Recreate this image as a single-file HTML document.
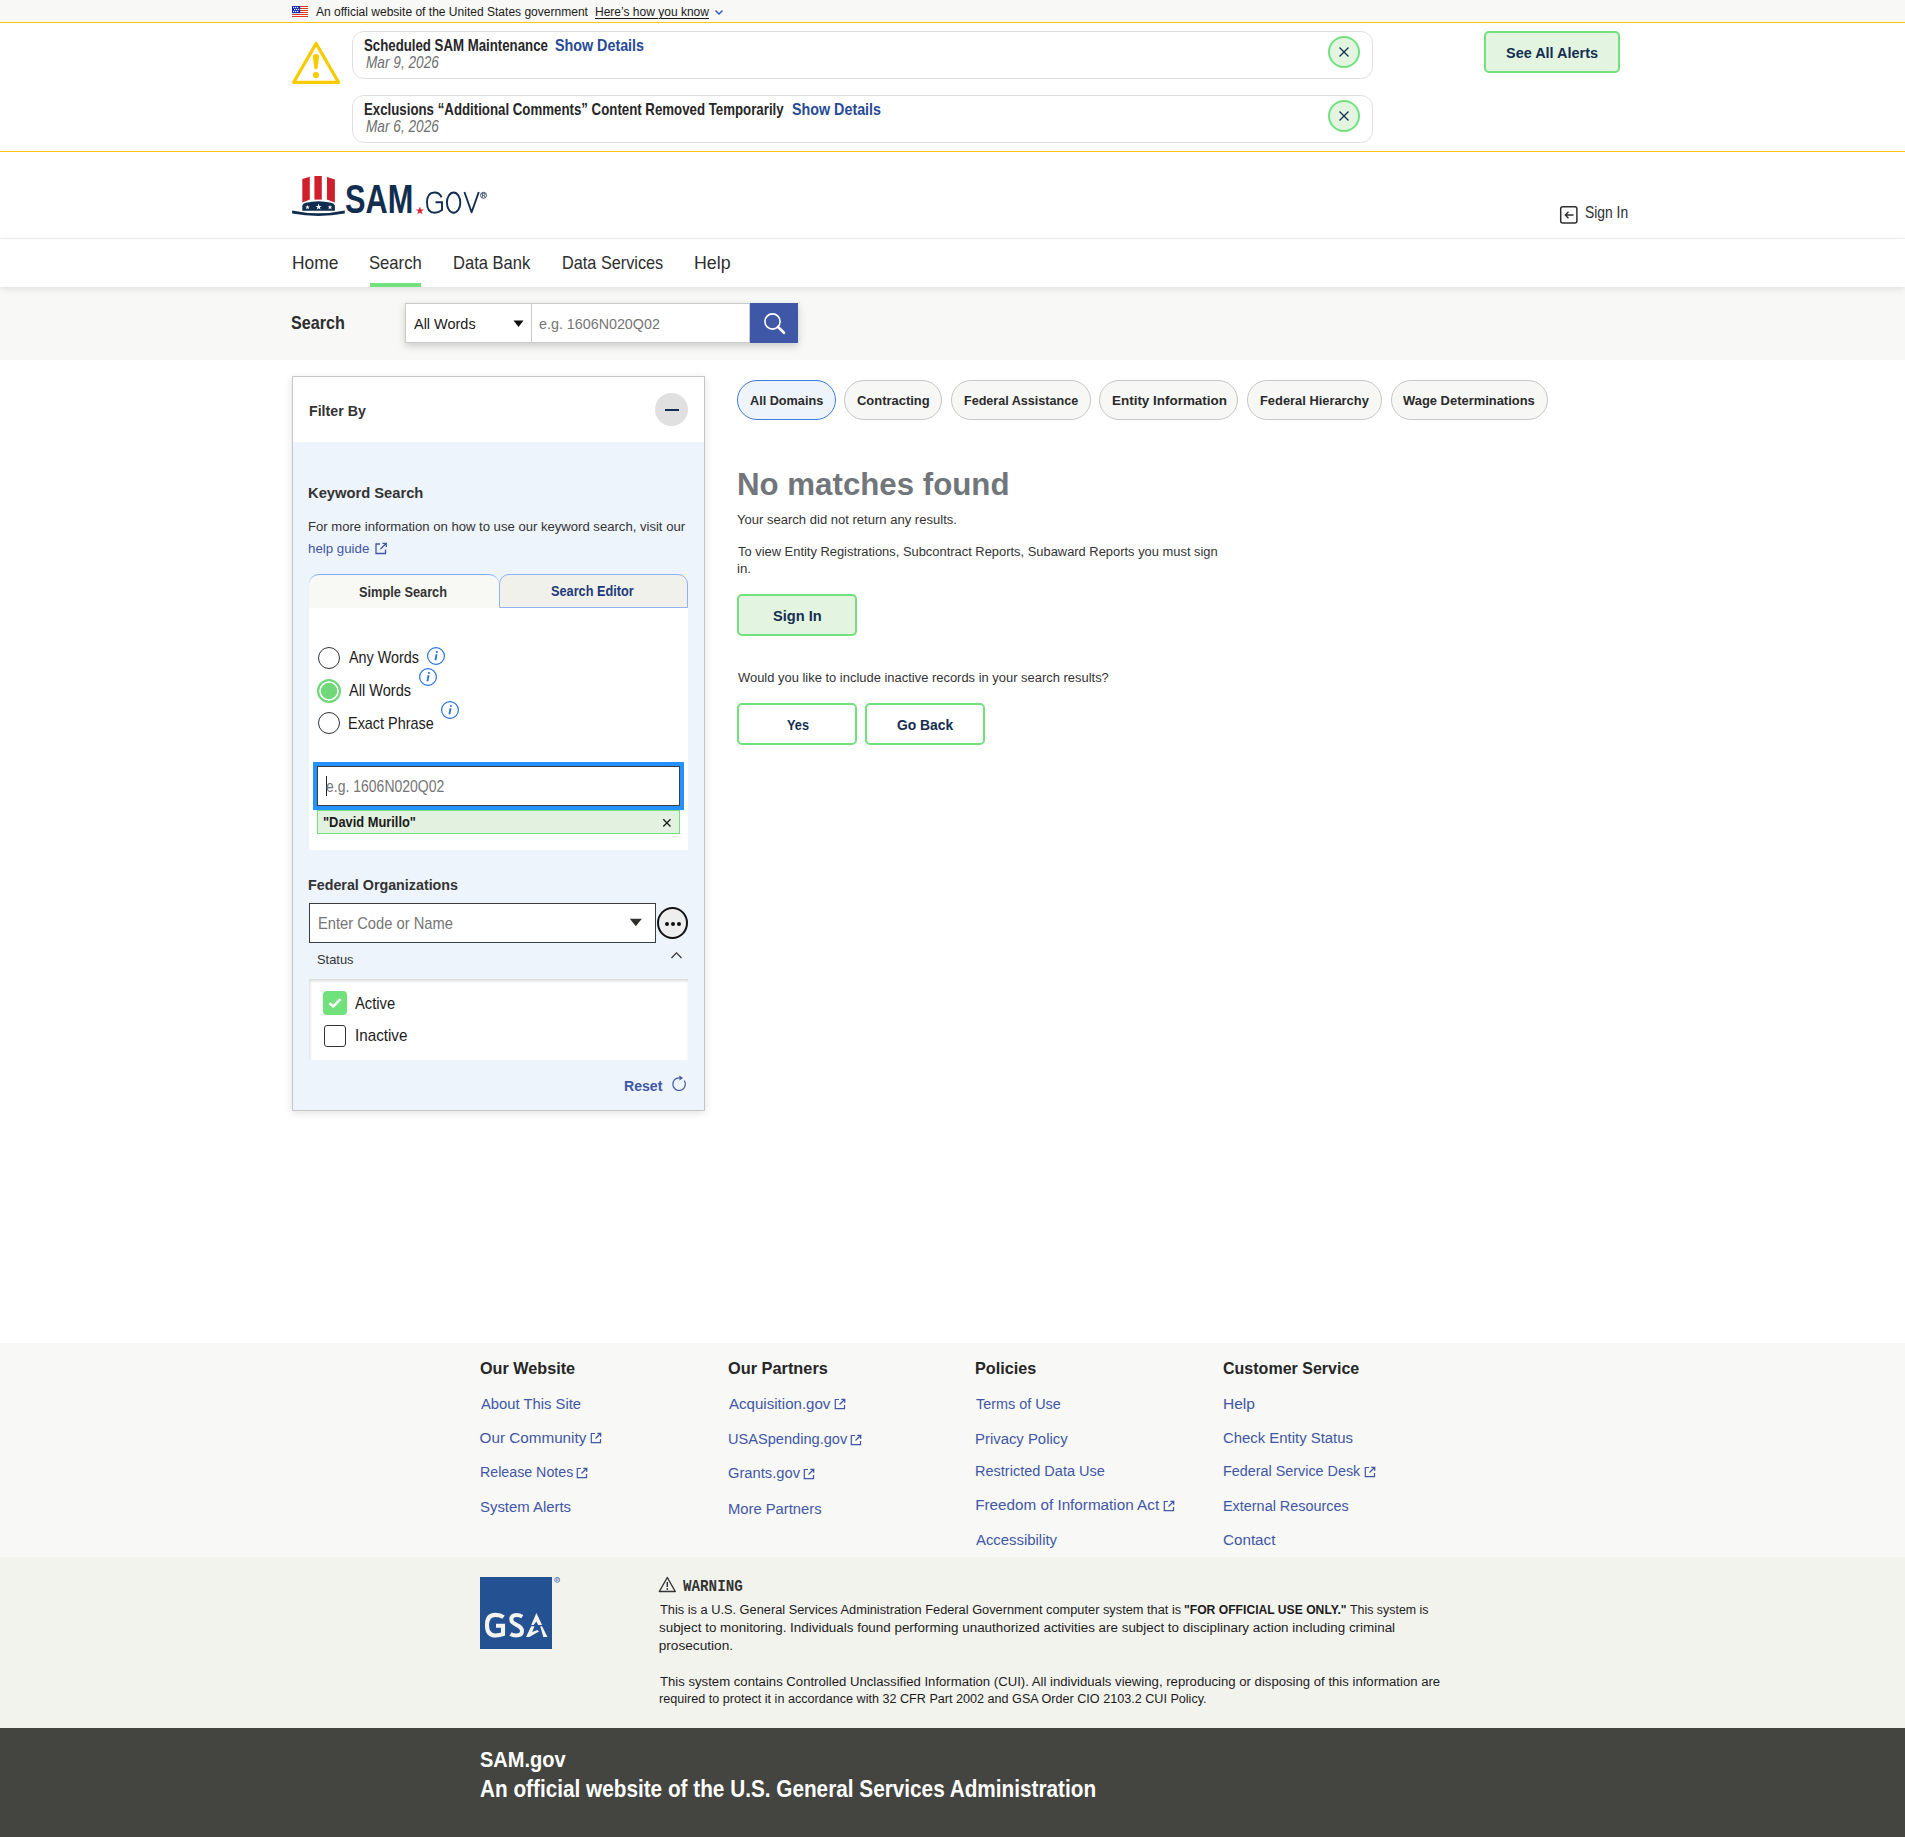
<!DOCTYPE html>
<html><head><meta charset="utf-8"><title>SAM.gov Search</title>
<style>
html,body{margin:0;padding:0;}
body{width:1905px;height:1837px;position:relative;overflow:hidden;background:#fff;font-family:"Liberation Sans",sans-serif;}
.t{position:absolute;white-space:nowrap;line-height:1;transform-origin:0 0;}
.b{position:absolute;}
svg.b{overflow:visible}
</style></head><body>
<div class="b" style="left:0px;top:0px;width:1905px;height:22px;background:#f8f8f6"></div>
<div class="b" style="left:0px;top:22px;width:1905px;height:1px;background:#fcc60e"></div>
<div class="b" style="left:0px;top:151px;width:1905px;height:1px;background:#fcc60e"></div>
<div class="b" style="left:0px;top:238px;width:1905px;height:1px;background:#f0f0ec"></div>
<div class="b" style="left:0px;top:287px;width:1905px;height:73px;background:#f8f8f6"></div>
<div class="b" style="left:0px;top:239px;width:1905px;height:48px;background:#fff;box-shadow:0 2px 7px rgba(0,0,0,.10);z-index:2"></div>
<div class="b" style="left:0px;top:1343px;width:1905px;height:214px;background:#f8f8f6"></div>
<div class="b" style="left:0px;top:1557px;width:1905px;height:171px;background:#f3f3ee"></div>
<div class="b" style="left:0px;top:1728px;width:1905px;height:109px;background:#444540"></div>
<svg class="b" style="left:292px;top:5px" width="16" height="13" viewBox="0 0 16 13"><rect width="16" height="13" fill="#fff"/><rect y="1" width="16" height="1" fill="#dc3a1a"/><rect y="3" width="16" height="1" fill="#dc3a1a"/><rect y="5" width="16" height="1" fill="#dc3a1a"/><rect y="7" width="16" height="1" fill="#dc3a1a"/><rect y="9" width="16" height="1" fill="#dc3a1a"/><rect y="11" width="16" height="1" fill="#dc3a1a"/><rect y="1" width="8.2" height="7.2" fill="#0a24b8"/><circle cx="1.7" cy="2.5" r="0.65" fill="#fff"/><circle cx="3.7" cy="2.5" r="0.65" fill="#fff"/><circle cx="5.7" cy="2.5" r="0.65" fill="#fff"/><circle cx="2.7" cy="4.5" r="0.65" fill="#fff"/><circle cx="4.7" cy="4.5" r="0.65" fill="#fff"/><circle cx="6.7" cy="4.5" r="0.65" fill="#fff"/><circle cx="1.7" cy="6.5" r="0.65" fill="#fff"/><circle cx="3.7" cy="6.5" r="0.65" fill="#fff"/><circle cx="5.7" cy="6.5" r="0.65" fill="#fff"/></svg>
<div class="t" style="left:316.00px;top:4.93px;font-size:13.08px;color:#1b1b1b;transform:scaleX(0.9199);">An official website of the United States government</div>
<div class="t" style="left:594.99px;top:4.93px;font-size:13.08px;color:#1b1b1b;transform:scaleX(0.9187);text-decoration:underline;text-decoration-thickness:1px;text-underline-offset:2px;">Here’s how you know</div>
<svg class="b" style="left:714px;top:8px" width="10" height="8" viewBox="0 0 10 8"><path d="M1.5 2.5 L5 6 L8.5 2.5" fill="none" stroke="#2d56b3" stroke-width="1.4"/></svg>
<svg class="b" style="left:290px;top:39px" width="52" height="47" viewBox="0 0 52 47"><path d="M26.1 4.5 L48.5 43.3 L3.7 43.3 Z" fill="none" stroke="#f7cb00" stroke-width="3.3" stroke-linejoin="round"/><path d="M22.8 17.6 Q22.8 15 25.95 15 Q29.1 15 29.1 17.6 L27.6 29 Q27.5 30.2 25.95 30.2 Q24.4 30.2 24.3 29 Z" fill="#f7cb00"/><circle cx="25.95" cy="36" r="3.1" fill="#f7cb00"/></svg>
<div class="b" style="left:352px;top:31px;width:1021px;height:48px;border:1px solid #dfdfdf;border-radius:12px;box-sizing:border-box;background:#fff"></div>
<div class="t" style="left:363.99px;top:37.71px;font-size:15.7px;color:#262626;font-weight:700;transform:scaleX(0.8437);">Scheduled SAM Maintenance</div>
<div class="t" style="left:554.99px;top:37.71px;font-size:15.7px;color:#274b98;font-weight:700;transform:scaleX(0.9117);">Show Details</div>
<div class="t" style="left:365.50px;top:55.11px;font-size:15.7px;color:#6f6f6f;font-style:italic;transform:scaleX(0.8701);">Mar 9, 2026</div>
<div class="b" style="left:1328px;top:36px;width:32px;height:32px;border:2px solid #70e17b;border-radius:50%;box-sizing:border-box;background:#e3f5e1"></div>
<svg class="b" style="left:1338px;top:46px" width="12" height="12" viewBox="0 0 12 12"><path d="M1.5 1.5 L10.5 10.5 M10.5 1.5 L1.5 10.5" stroke="#162e51" stroke-width="1.3"/></svg>
<div class="b" style="left:352px;top:95px;width:1021px;height:48px;border:1px solid #dfdfdf;border-radius:12px;box-sizing:border-box;background:#fff"></div>
<div class="t" style="left:364.00px;top:101.71px;font-size:15.7px;color:#262626;font-weight:700;transform:scaleX(0.8451);">Exclusions “Additional Comments” Content Removed Temporarily</div>
<div class="t" style="left:791.99px;top:101.71px;font-size:15.7px;color:#274b98;font-weight:700;transform:scaleX(0.9117);">Show Details</div>
<div class="t" style="left:365.50px;top:119.11px;font-size:15.7px;color:#6f6f6f;font-style:italic;transform:scaleX(0.8701);">Mar 6, 2026</div>
<div class="b" style="left:1328px;top:100px;width:32px;height:32px;border:2px solid #70e17b;border-radius:50%;box-sizing:border-box;background:#e3f5e1"></div>
<svg class="b" style="left:1338px;top:110px" width="12" height="12" viewBox="0 0 12 12"><path d="M1.5 1.5 L10.5 10.5 M10.5 1.5 L1.5 10.5" stroke="#162e51" stroke-width="1.3"/></svg>
<div class="b" style="left:1484px;top:31px;width:136px;height:42px;border:2px solid #70e17b;border-radius:5px;box-sizing:border-box;background:#e3f5e1"></div>
<div class="t" style="left:1505.99px;top:45.95px;font-size:14.24px;color:#162e51;font-weight:700;transform:scaleX(1.0147);">See All Alerts</div>
<svg class="b" style="left:290px;top:172px" width="200" height="48" viewBox="290 172 200 48">
<path d="M302.3 179.1 L309.8 176.8 L309.8 199.6 L302.3 202.5 Z" fill="#cf1f2c"/>
<path d="M314.4 176 L321.8 176 L321.8 199.6 L314.4 199.6 Z" fill="#cf1f2c"/>
<path d="M327 177 L334.9 179.4 L334.9 202.5 L327 199.6 Z" fill="#cf1f2c"/>
<path d="M302.3 210.7 L302.3 205.5 Q303 203.5 306 202.8 Q318.6 199.6 331 202.8 Q334.2 203.5 334.9 205.5 L334.9 210.7 Z" fill="#112e51"/>
<path d="M292.1 210.4 Q318.6 216 344.8 210.4 L344.8 213.6 Q318.6 218.3 292.1 213.6 Z" fill="#112e51"/>
<path d="M318.6 203.6 L319.4 205.9 L321.7 205.9 L319.8 207.3 L320.5 209.6 L318.6 208.2 L316.7 209.6 L317.4 207.3 L315.5 205.9 L317.8 205.9 Z" fill="#fff"/>
<path d="M307.5 204.9 L308.1 206.5 L309.8 206.5 L308.5 207.5 L309 209.2 L307.5 208.2 L306 209.2 L306.5 207.5 L305.2 206.5 L306.9 206.5 Z" fill="#fff"/>
<path d="M330 204.9 L330.6 206.5 L332.3 206.5 L331 207.5 L331.5 209.2 L330 208.2 L328.5 209.2 L329 207.5 L327.7 206.5 L329.4 206.5 Z" fill="#fff"/>
<text x="345" y="213" font-size="40" font-weight="700" fill="#112e51" font-family="Liberation Sans" textLength="68.2" lengthAdjust="spacingAndGlyphs">SAM</text>
<path d="M419.9 206.5 L421 209.4 L424.1 209.4 L421.6 211.3 L422.5 214.3 L419.9 212.5 L417.3 214.3 L418.2 211.3 L415.7 209.4 L418.8 209.4 Z" fill="#d52b3a"/>
<path d="M441.6 197.3 Q439.5 192.5 434.5 192.5 Q427 192.5 427 202.6 Q427 212.8 434.5 212.8 Q438.5 212.8 442 210 L442 202.3 L435.5 202.3" fill="none" stroke="#112e51" stroke-width="1.9"/>
<ellipse cx="453.6" cy="202.6" rx="6.7" ry="10.1" fill="none" stroke="#112e51" stroke-width="1.9"/>
<path d="M464.4 192 L471.6 212.3 L478.8 192" fill="none" stroke="#112e51" stroke-width="1.9" stroke-linejoin="round"/>
<circle cx="483.5" cy="195.3" r="3" fill="none" stroke="#112e51" stroke-width="0.8"/>
<path d="M482.4 197.4 L482.4 193.3 L484 193.3 Q485 193.3 485 194.3 Q485 195.3 484 195.3 L482.4 195.3 M483.8 195.3 L485 197.4" fill="none" stroke="#112e51" stroke-width="0.7"/>
</svg>
<svg class="b" style="left:1559px;top:205px" width="20" height="20" viewBox="0 0 20 20"><rect x="1.7" y="1.7" width="16.2" height="16.2" rx="2" fill="none" stroke="#2e2e2e" stroke-width="1.5"/><path d="M14.5 10 L6.5 10 M9.5 6.8 L6.3 10 L9.5 13.2" fill="none" stroke="#2e2e2e" stroke-width="1.4"/></svg>
<div class="t" style="left:1584.95px;top:205.46px;font-size:15.99px;color:#2e2e2e;transform:scaleX(0.8655);">Sign In</div>
<div class="t" style="left:291.64px;top:253.62px;font-size:18.17px;color:#2e2e2e;transform:scaleX(0.9564);z-index:3;">Home</div>
<div class="t" style="left:368.96px;top:253.62px;font-size:18.17px;color:#2e2e2e;transform:scaleX(0.9165);z-index:3;">Search</div>
<div class="t" style="left:452.59px;top:253.62px;font-size:18.17px;color:#2e2e2e;transform:scaleX(0.9110);z-index:3;">Data Bank</div>
<div class="t" style="left:561.69px;top:253.62px;font-size:18.17px;color:#2e2e2e;transform:scaleX(0.8959);z-index:3;">Data Services</div>
<div class="t" style="left:694.39px;top:253.62px;font-size:18.17px;color:#2e2e2e;transform:scaleX(0.9794);z-index:3;">Help</div>
<div class="b" style="left:370px;top:283px;width:51px;height:4px;background:#70e17b;z-index:3"></div>
<div class="t" style="left:291.44px;top:313.62px;font-size:18.17px;color:#2e2e2e;font-weight:700;transform:scaleX(0.8892);">Search</div>
<div class="b" style="left:405px;top:303px;width:393px;height:40px;box-shadow:0 3px 8px rgba(0,0,0,.18);background:#fff"></div>
<div class="b" style="left:405px;top:303px;width:127px;height:40px;border:1px solid #c9c9c9;box-sizing:border-box;background:#fff"></div>
<div class="b" style="left:532px;top:303px;width:218px;height:40px;border:1px solid #c9c9c9;border-left:none;box-sizing:border-box;background:#fff"></div>
<div class="t" style="left:414.42px;top:315.96px;font-size:15.41px;color:#1b1b1b;transform:scaleX(0.9393);">All Words</div>
<svg class="b" style="left:513px;top:320px" width="11" height="8" viewBox="0 0 11 8"><path d="M0.5 0.5 L10.5 0.5 L5.5 7 Z" fill="#111"/></svg>
<div class="t" style="left:539.39px;top:315.96px;font-size:15.41px;color:#757575;transform:scaleX(0.9281);">e.g. 1606N020Q02</div>
<div class="b" style="left:750px;top:303px;width:48px;height:40px;background:#3f57a7"></div>
<svg class="b" style="left:750px;top:303px" width="48" height="40" viewBox="0 0 48 40"><circle cx="22.5" cy="18.5" r="7.6" fill="none" stroke="#fff" stroke-width="1.6"/><path d="M28 24 L34 29.8" stroke="#fff" stroke-width="2.6" stroke-linecap="round"/></svg>
<div class="b" style="left:292px;top:376px;width:413px;height:735px;border:1px solid #c6c6c6;box-sizing:border-box;background:#edf4fb;box-shadow:0 2px 8px rgba(0,0,0,.12)"></div>
<div class="b" style="left:293px;top:377px;width:411px;height:65px;background:#fff"></div>
<div class="t" style="left:308.67px;top:403.70px;font-size:14.53px;color:#333;font-weight:700;transform:scaleX(0.9781);">Filter By</div>
<div class="b" style="left:655px;top:393px;width:33px;height:33px;background:#e0e0e0;border-radius:50%"></div>
<div class="b" style="left:665px;top:409px;width:14px;height:1.6px;background:#162e51"></div>
<div class="t" style="left:308.39px;top:485.08px;font-size:15.26px;color:#333;font-weight:700;transform:scaleX(0.9652);">Keyword Search</div>
<div class="t" style="left:308.40px;top:519.80px;font-size:13.23px;color:#333;transform:scaleX(0.9908);">For more information on how to use our keyword search, visit our</div>
<div class="t" style="left:308.39px;top:541.50px;font-size:13.23px;color:#4155a8;transform:scaleX(1.0055);">help guide</div>
<svg class="b" style="left:374px;top:542px" width="14" height="13" viewBox="0 0 14 13"><path d="M6 2 L2 2 L2 11.5 L11.5 11.5 L11.5 7.5" fill="none" stroke="#4155a8" stroke-width="1.3"/><path d="M6.5 7 L12 1.5 M8.5 1.3 L12.3 1.3 L12.3 5" fill="none" stroke="#4155a8" stroke-width="1.3"/></svg>
<div class="b" style="left:309px;top:608px;width:379px;height:242px;background:#fff"></div>
<div class="b" style="left:309px;top:574px;width:190px;height:34px;border-top:1px solid #80aef7;border-radius:10px 10px 0 0;box-sizing:border-box;background:#f8f8f5"></div>
<div class="b" style="left:499px;top:574px;width:189px;height:34px;border:1px solid #8db3f5;border-radius:10px 10px 0 0;box-sizing:border-box;background:#f1f1ec"></div>
<div class="t" style="left:359.28px;top:584.70px;font-size:14.53px;color:#333;font-weight:700;transform:scaleX(0.8796);">Simple Search</div>
<div class="t" style="left:550.99px;top:583.70px;font-size:14.53px;color:#1f3a7a;font-weight:700;transform:scaleX(0.8774);">Search Editor</div>
<div class="b" style="left:318px;top:647px;width:22px;height:22px;border:1.5px solid #333;border-radius:50%;box-sizing:border-box;background:#fff"></div>
<div class="b" style="left:317px;top:679px;width:24px;height:24px;border:2.3px solid #70d87a;border-radius:50%;box-sizing:border-box;background:#70d87a;box-shadow:inset 0 0 0 1.7px #fff"></div>
<div class="b" style="left:318px;top:712px;width:22px;height:22px;border:1.5px solid #333;border-radius:50%;box-sizing:border-box;background:#fff"></div>
<div class="t" style="left:349.20px;top:650.46px;font-size:15.99px;color:#1b1b1b;transform:scaleX(0.8986);">Any Words</div>
<div class="t" style="left:349.20px;top:683.46px;font-size:15.99px;color:#1b1b1b;transform:scaleX(0.9104);">All Words</div>
<div class="t" style="left:348.18px;top:716.46px;font-size:15.99px;color:#1b1b1b;transform:scaleX(0.9028);">Exact Phrase</div>
<svg class="b" style="left:426px;top:646px" width="20" height="20" viewBox="0 0 20 20"><circle cx="10" cy="10" r="8.4" fill="none" stroke="#2672de" stroke-width="1.2"/><path d="M10.6 8.2 L9.4 14.2" stroke="#2672de" stroke-width="1.8"/><circle cx="10.9" cy="6" r="1.05" fill="#2672de"/></svg>
<svg class="b" style="left:418px;top:667px" width="20" height="20" viewBox="0 0 20 20"><circle cx="10" cy="10" r="8.4" fill="none" stroke="#2672de" stroke-width="1.2"/><path d="M10.6 8.2 L9.4 14.2" stroke="#2672de" stroke-width="1.8"/><circle cx="10.9" cy="6" r="1.05" fill="#2672de"/></svg>
<svg class="b" style="left:440px;top:700px" width="20" height="20" viewBox="0 0 20 20"><circle cx="10" cy="10" r="8.4" fill="none" stroke="#2672de" stroke-width="1.2"/><path d="M10.6 8.2 L9.4 14.2" stroke="#2672de" stroke-width="1.8"/><circle cx="10.9" cy="6" r="1.05" fill="#2672de"/></svg>
<div class="b" style="left:313px;top:762px;width:371px;height:48px;background:#2491ff"></div>
<div class="b" style="left:317px;top:766px;width:363px;height:40px;border:1.3px solid #3d3d3d;box-sizing:border-box;background:#fff"></div>
<div class="b" style="left:326px;top:776px;width:1px;height:20px;background:#222"></div>
<div class="t" style="left:326.49px;top:779.46px;font-size:15.99px;color:#757575;transform:scaleX(0.8758);">e.g. 1606N020Q02</div>
<div class="b" style="left:317px;top:810px;width:363px;height:24px;border:1px solid #70e17b;box-sizing:border-box;background:#e3f2e0"></div>
<div class="t" style="left:322.57px;top:814.70px;font-size:14.53px;color:#1b1b1b;font-weight:700;transform:scaleX(0.8861);">&quot;David Murillo&quot;</div>
<svg class="b" style="left:662px;top:818px" width="10" height="10" viewBox="0 0 10 10"><path d="M1.3 1.3 L8.5 8.5 M8.5 1.3 L1.3 8.5" stroke="#1b1b1b" stroke-width="1.3"/></svg>
<div class="t" style="left:308.40px;top:877.08px;font-size:15.26px;color:#333;font-weight:700;transform:scaleX(0.9365);">Federal Organizations</div>
<div class="b" style="left:309px;top:903px;width:347px;height:40px;border:1.5px solid #3d3d3d;box-sizing:border-box;background:#fff"></div>
<div class="t" style="left:317.68px;top:915.71px;font-size:15.7px;color:#757575;transform:scaleX(0.9377);">Enter Code or Name</div>
<svg class="b" style="left:629px;top:918px" width="14" height="10" viewBox="0 0 14 10"><path d="M0.8 0.8 L12.8 0.8 L6.8 8.3 Z" fill="#2e2e2a"/></svg>
<div class="b" style="left:657px;top:907px;width:31px;height:32px;border:2px solid #111;border-radius:50%;box-sizing:border-box;background:#eee"></div>
<div class="b" style="left:665.3px;top:922px;width:4px;height:4px;background:#111;border-radius:50%"></div>
<div class="b" style="left:671.2px;top:922px;width:4px;height:4px;background:#111;border-radius:50%"></div>
<div class="b" style="left:677.1px;top:922px;width:4px;height:4px;background:#111;border-radius:50%"></div>
<svg class="b" style="left:670px;top:950px" width="13" height="10" viewBox="0 0 13 10"><path d="M1.5 8 L6.5 2.8 L11.5 8" fill="none" stroke="#333" stroke-width="1.2"/></svg>
<div class="t" style="left:316.57px;top:953.55px;font-size:12.35px;color:#333;transform:scaleX(1.0422);">Status</div>
<div class="b" style="left:309px;top:979px;width:379px;height:81px;background:#fff;box-shadow:inset 1px 2px 3px rgba(0,0,0,.15)"></div>
<div class="b" style="left:323px;top:991px;width:24px;height:24px;background:#70e17b;border-radius:4px"></div>
<svg class="b" style="left:323px;top:991px" width="24" height="24" viewBox="0 0 24 24"><path d="M6.5 12 L10.2 15.5 L17.5 8.2" fill="none" stroke="#fff" stroke-width="2.6"/></svg>
<div class="b" style="left:324px;top:1025px;width:22px;height:22px;border:1.5px solid #333;border-radius:3px;box-sizing:border-box;background:#fff"></div>
<div class="t" style="left:355.10px;top:996.46px;font-size:15.99px;color:#1b1b1b;transform:scaleX(0.9221);">Active</div>
<div class="t" style="left:354.88px;top:1028.46px;font-size:15.99px;color:#1b1b1b;transform:scaleX(0.9519);">Inactive</div>
<div class="t" style="left:624.46px;top:1079.33px;font-size:14.97px;color:#3f57a6;font-weight:700;transform:scaleX(0.9403);">Reset</div>
<svg class="b" style="left:670px;top:1074px" width="20" height="20" viewBox="0 0 20 20"><path d="M14.2 6.5 A6.3 6.3 0 1 1 9.5 3.9" fill="none" stroke="#3f57a6" stroke-width="1.2"/><path d="M9.3 1.6 L13.1 3.9 L9.5 6.4 Z" fill="#3f57a6"/></svg>
<div class="b" style="left:737px;top:380px;width:99px;height:40px;border:1.5px solid #3b7ae0;border-radius:20px;box-sizing:border-box;background:#edf4fb"></div>
<div class="t" style="left:750.20px;top:394.24px;font-size:13.66px;color:#2a2a2a;font-weight:700;transform:scaleX(0.9279);">All Domains</div>
<div class="b" style="left:844px;top:380px;width:98px;height:40px;border:1px solid #c6c6c6;border-radius:20px;box-sizing:border-box;background:#f7f7f5"></div>
<div class="t" style="left:857.39px;top:394.24px;font-size:13.66px;color:#2a2a2a;font-weight:700;transform:scaleX(0.9484);">Contracting</div>
<div class="b" style="left:951px;top:380px;width:140px;height:40px;border:1px solid #c6c6c6;border-radius:20px;box-sizing:border-box;background:#f7f7f5"></div>
<div class="t" style="left:963.78px;top:394.24px;font-size:13.66px;color:#2a2a2a;font-weight:700;transform:scaleX(0.9212);">Federal Assistance</div>
<div class="b" style="left:1099px;top:380px;width:139px;height:40px;border:1px solid #c6c6c6;border-radius:20px;box-sizing:border-box;background:#f7f7f5"></div>
<div class="t" style="left:1111.59px;top:394.24px;font-size:13.66px;color:#2a2a2a;font-weight:700;transform:scaleX(0.9840);">Entity Information</div>
<div class="b" style="left:1247px;top:380px;width:135px;height:40px;border:1px solid #c6c6c6;border-radius:20px;box-sizing:border-box;background:#f7f7f5"></div>
<div class="t" style="left:1259.59px;top:394.24px;font-size:13.66px;color:#2a2a2a;font-weight:700;transform:scaleX(0.9429);">Federal Hierarchy</div>
<div class="b" style="left:1391px;top:380px;width:157px;height:40px;border:1px solid #c6c6c6;border-radius:20px;box-sizing:border-box;background:#f7f7f5"></div>
<div class="t" style="left:1403.40px;top:394.24px;font-size:13.66px;color:#2a2a2a;font-weight:700;transform:scaleX(0.9469);">Wage Determinations</div>
<div class="t" style="left:736.66px;top:467.93px;font-size:31.98px;color:#71767a;font-weight:700;transform:scaleX(0.9773);">No matches found</div>
<div class="t" style="left:736.89px;top:512.80px;font-size:13.23px;color:#333;transform:scaleX(0.9866);">Your search did not return any results.</div>
<div class="t" style="left:737.90px;top:544.80px;font-size:13.23px;color:#333;transform:scaleX(0.9760);">To view Entity Registrations, Subcontract Reports, Subaward Reports you must sign</div>
<div class="t" style="left:736.63px;top:561.80px;font-size:13.23px;color:#333;transform:scaleX(1.0033);">in.</div>
<div class="b" style="left:737px;top:594px;width:120px;height:42px;border:2px solid #70e17b;border-radius:5px;box-sizing:border-box;background:#e3f5e1"></div>
<div class="t" style="left:772.96px;top:608.70px;font-size:14.53px;color:#162e51;font-weight:700;transform:scaleX(1.0082);">Sign In</div>
<div class="t" style="left:737.90px;top:670.80px;font-size:13.23px;color:#333;transform:scaleX(0.9787);">Would you like to include inactive records in your search results?</div>
<div class="b" style="left:737px;top:703px;width:120px;height:42px;border:2px solid #70e17b;border-radius:5px;box-sizing:border-box;background:#fff"></div>
<div class="b" style="left:865px;top:703px;width:120px;height:42px;border:2px solid #70e17b;border-radius:5px;box-sizing:border-box;background:#fff"></div>
<div class="t" style="left:786.69px;top:717.70px;font-size:14.53px;color:#162e51;font-weight:700;transform:scaleX(0.8783);">Yes</div>
<div class="t" style="left:896.88px;top:717.70px;font-size:14.53px;color:#162e51;font-weight:700;transform:scaleX(0.9550);">Go Back</div>
<div class="t" style="left:479.57px;top:1360.96px;font-size:15.99px;color:#262626;font-weight:700;transform:scaleX(1.0132);">Our Website</div>
<div class="t" style="left:727.59px;top:1360.96px;font-size:15.99px;color:#262626;font-weight:700;transform:scaleX(1.0219);">Our Partners</div>
<div class="t" style="left:975.17px;top:1360.96px;font-size:15.99px;color:#262626;font-weight:700;transform:scaleX(1.0126);">Policies</div>
<div class="t" style="left:1223.38px;top:1360.96px;font-size:15.99px;color:#262626;font-weight:700;transform:scaleX(1.0024);">Customer Service</div>
<div class="t" style="left:480.60px;top:1396.08px;font-size:15.26px;color:#3f57a6;transform:scaleX(0.9700);">About This Site</div>
<div class="t" style="left:479.59px;top:1430.08px;font-size:15.26px;color:#3f57a6;">Our Community</div>
<svg class="b" style="left:590px;top:1432px" width="12" height="12" viewBox="0 0 12 12"><path d="M5 1.5 L1.3 1.5 L1.3 10.7 L10.5 10.7 L10.5 7" fill="none" stroke="#3f57a6" stroke-width="1.2"/><path d="M5.5 6.5 L10.5 1.5 M7.3 1.3 L10.7 1.3 L10.7 4.7" fill="none" stroke="#3f57a6" stroke-width="1.3"/></svg>
<div class="t" style="left:479.58px;top:1464.48px;font-size:15.26px;color:#3f57a6;transform:scaleX(0.9323);">Release Notes</div>
<svg class="b" style="left:576px;top:1467px" width="12" height="12" viewBox="0 0 12 12"><path d="M5 1.5 L1.3 1.5 L1.3 10.7 L10.5 10.7 L10.5 7" fill="none" stroke="#3f57a6" stroke-width="1.2"/><path d="M5.5 6.5 L10.5 1.5 M7.3 1.3 L10.7 1.3 L10.7 4.7" fill="none" stroke="#3f57a6" stroke-width="1.3"/></svg>
<div class="t" style="left:479.57px;top:1499.08px;font-size:15.26px;color:#3f57a6;transform:scaleX(0.9769);">System Alerts</div>
<div class="t" style="left:728.59px;top:1396.08px;font-size:15.26px;color:#3f57a6;transform:scaleX(0.9884);">Acquisition.gov</div>
<svg class="b" style="left:834px;top:1398px" width="12" height="12" viewBox="0 0 12 12"><path d="M5 1.5 L1.3 1.5 L1.3 10.7 L10.5 10.7 L10.5 7" fill="none" stroke="#3f57a6" stroke-width="1.2"/><path d="M5.5 6.5 L10.5 1.5 M7.3 1.3 L10.7 1.3 L10.7 4.7" fill="none" stroke="#3f57a6" stroke-width="1.3"/></svg>
<div class="t" style="left:727.59px;top:1431.08px;font-size:15.26px;color:#3f57a6;transform:scaleX(0.9569);">USASpending.gov</div>
<svg class="b" style="left:850px;top:1434px" width="12" height="12" viewBox="0 0 12 12"><path d="M5 1.5 L1.3 1.5 L1.3 10.7 L10.5 10.7 L10.5 7" fill="none" stroke="#3f57a6" stroke-width="1.2"/><path d="M5.5 6.5 L10.5 1.5 M7.3 1.3 L10.7 1.3 L10.7 4.7" fill="none" stroke="#3f57a6" stroke-width="1.3"/></svg>
<div class="t" style="left:727.58px;top:1464.58px;font-size:15.26px;color:#3f57a6;transform:scaleX(0.9653);">Grants.gov</div>
<svg class="b" style="left:803px;top:1468px" width="12" height="12" viewBox="0 0 12 12"><path d="M5 1.5 L1.3 1.5 L1.3 10.7 L10.5 10.7 L10.5 7" fill="none" stroke="#3f57a6" stroke-width="1.2"/><path d="M5.5 6.5 L10.5 1.5 M7.3 1.3 L10.7 1.3 L10.7 4.7" fill="none" stroke="#3f57a6" stroke-width="1.3"/></svg>
<div class="t" style="left:727.58px;top:1501.08px;font-size:15.26px;color:#3f57a6;transform:scaleX(0.9683);">More Partners</div>
<div class="t" style="left:976.20px;top:1396.48px;font-size:15.26px;color:#3f57a6;transform:scaleX(0.9434);">Terms of Use</div>
<div class="t" style="left:975.19px;top:1430.58px;font-size:15.26px;color:#3f57a6;transform:scaleX(0.9760);">Privacy Policy</div>
<div class="t" style="left:975.20px;top:1463.38px;font-size:15.26px;color:#3f57a6;transform:scaleX(0.9518);">Restricted Data Use</div>
<div class="t" style="left:975.19px;top:1497.08px;font-size:15.26px;color:#3f57a6;">Freedom of Information Act</div>
<svg class="b" style="left:1163px;top:1500px" width="12" height="12" viewBox="0 0 12 12"><path d="M5 1.5 L1.3 1.5 L1.3 10.7 L10.5 10.7 L10.5 7" fill="none" stroke="#3f57a6" stroke-width="1.2"/><path d="M5.5 6.5 L10.5 1.5 M7.3 1.3 L10.7 1.3 L10.7 4.7" fill="none" stroke="#3f57a6" stroke-width="1.3"/></svg>
<div class="t" style="left:976.20px;top:1532.08px;font-size:15.26px;color:#3f57a6;transform:scaleX(0.9761);">Accessibility</div>
<div class="t" style="left:1223.39px;top:1396.08px;font-size:15.26px;color:#3f57a6;transform:scaleX(1.0185);">Help</div>
<div class="t" style="left:1223.40px;top:1430.08px;font-size:15.26px;color:#3f57a6;transform:scaleX(0.9763);">Check Entity Status</div>
<div class="t" style="left:1223.40px;top:1463.08px;font-size:15.26px;color:#3f57a6;transform:scaleX(0.9419);">Federal Service Desk</div>
<svg class="b" style="left:1364px;top:1466px" width="12" height="12" viewBox="0 0 12 12"><path d="M5 1.5 L1.3 1.5 L1.3 10.7 L10.5 10.7 L10.5 7" fill="none" stroke="#3f57a6" stroke-width="1.2"/><path d="M5.5 6.5 L10.5 1.5 M7.3 1.3 L10.7 1.3 L10.7 4.7" fill="none" stroke="#3f57a6" stroke-width="1.3"/></svg>
<div class="t" style="left:1223.40px;top:1498.08px;font-size:15.26px;color:#3f57a6;transform:scaleX(0.9446);">External Resources</div>
<div class="t" style="left:1223.39px;top:1532.08px;font-size:15.26px;color:#3f57a6;transform:scaleX(0.9972);">Contact</div>
<div class="b" style="left:480px;top:1577px;width:72px;height:72px;background:#245192"></div>
<svg class="b" style="left:470px;top:1570px" width="100" height="85" viewBox="470 1570 100 85"><path d="M503.6 1617.2 Q500.5 1614.9 495.5 1614.9 Q487 1614.9 487 1625.2 Q487 1635.5 495.5 1635.5 Q500 1635.5 503 1634.2 L503 1625.8 L496 1625.8" fill="none" stroke="#f4f4ef" stroke-width="4.1"/><path d="M522.3 1616.6 Q519.5 1614.9 516.5 1614.9 Q511.3 1614.9 511.3 1619.5 Q511.3 1622.5 516.5 1624.8 Q522 1627.2 522 1631 Q522 1635.5 516.3 1635.5 Q512.8 1635.5 510.5 1634" fill="none" stroke="#f4f4ef" stroke-width="4"/><path d="M536.4 1613.1 L542.1 1624.9 L538.1 1624.9 L536.4 1621.4 L533.6 1624.9 L531.2 1624.9 Z M531.2 1626.3 L534.5 1626.3 L532.2 1632 L537.4 1630.1 L539 1631.5 L529.3 1637 L526 1637 Z M540.2 1626.3 L542.1 1626.3 L547.5 1637 L543.3 1637 Z" fill="#f4f4ef"/><circle cx="557.2" cy="1579.8" r="2.5" fill="none" stroke="#5a7ab8" stroke-width="0.9"/><path d="M556.3 1581.5 L556.3 1578.2 L557.6 1578.2 Q558.4 1578.2 558.4 1579 Q558.4 1579.8 557.6 1579.8 L556.3 1579.8 M557.5 1579.8 L558.4 1581.5" fill="none" stroke="#5a7ab8" stroke-width="0.6"/></svg>
<svg class="b" style="left:658px;top:1576px" width="19" height="17" viewBox="0 0 19 17"><path d="M9.3 1.5 L17.3 15.5 L1.3 15.5 Z" fill="none" stroke="#333" stroke-width="1.4" stroke-linejoin="round"/><path d="M9.3 6 L9.3 11" stroke="#333" stroke-width="1.5"/><circle cx="9.3" cy="13" r="0.9" fill="#333"/></svg>
<div class="t" style="left:683.00px;top:1579.64px;font-size:15.78px;color:#333;font-weight:700;font-family:'Liberation Mono',monospace;transform:scaleX(0.9022);">WARNING</div>
<div class="t" style="left:659.70px;top:1603.44px;font-size:13.66px;color:#1b1b1b;transform:scaleX(0.9368);">This is a U.S. General Services Administration Federal Government computer system that is</div>
<div class="t" style="left:1183.99px;top:1603.44px;font-size:13.66px;color:#1b1b1b;font-weight:700;transform:scaleX(0.8887);">&quot;FOR OFFICIAL USE ONLY.&quot;</div>
<div class="t" style="left:1350.00px;top:1603.44px;font-size:13.66px;color:#1b1b1b;transform:scaleX(0.9077);">This system is</div>
<div class="t" style="left:658.70px;top:1620.94px;font-size:13.66px;color:#1b1b1b;transform:scaleX(0.9815);">subject to monitoring. Individuals found performing unauthorized activities are subject to disciplinary action including criminal</div>
<div class="t" style="left:658.66px;top:1638.94px;font-size:13.66px;color:#1b1b1b;">prosecution.</div>
<div class="t" style="left:659.70px;top:1675.44px;font-size:13.66px;color:#1b1b1b;transform:scaleX(0.9624);">This system contains Controlled Unclassified Information (CUI). All individuals viewing, reproducing or disposing of this information are</div>
<div class="t" style="left:658.69px;top:1691.74px;font-size:13.66px;color:#1b1b1b;transform:scaleX(0.9229);">required to protect it in accordance with 32 CFR Part 2002 and GSA Order CIO 2103.2 CUI Policy.</div>
<div class="t" style="left:479.68px;top:1749.91px;font-size:21.37px;color:#fff;font-weight:700;transform:scaleX(0.9369);">SAM.gov</div>
<div class="t" style="left:479.70px;top:1778.31px;font-size:23.26px;color:#fff;font-weight:700;transform:scaleX(0.8924);">An official website of the U.S. General Services Administration</div>
</body></html>
